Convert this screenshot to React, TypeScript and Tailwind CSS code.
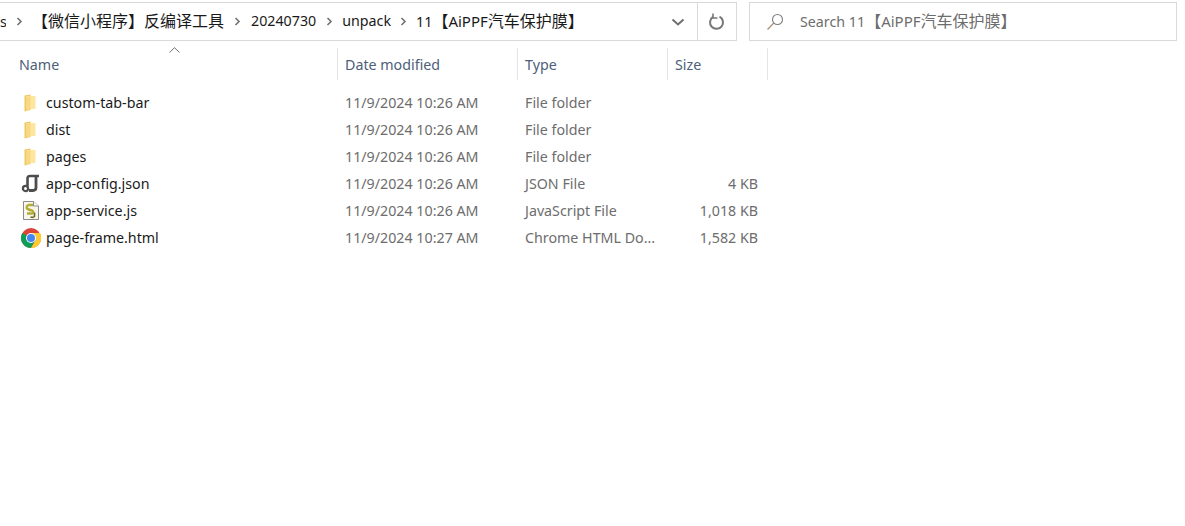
/**
 * @file File explorer folder view
 */

const FONT = "font-['Noto_Sans','Noto_Sans_CJK_SC',sans-serif]";

/**
 * Folder contents
 */
const rows = [
  {name: "custom-tab-bar", date: "11/9/2024 10:26 AM", type: "File folder", size: "", icon: "folder"},
  {name: "dist", date: "11/9/2024 10:26 AM", type: "File folder", size: "", icon: "folder"},
  {name: "pages", date: "11/9/2024 10:26 AM", type: "File folder", size: "", icon: "folder"},
  {name: "app-config.json", date: "11/9/2024 10:26 AM", type: "JSON File", size: "4 KB", icon: "json"},
  {name: "app-service.js", date: "11/9/2024 10:26 AM", type: "JavaScript File", size: "1,018 KB", icon: "js"},
  {name: "page-frame.html", date: "11/9/2024 10:27 AM", type: "Chrome HTML Do...", size: "1,582 KB", icon: "chrome"},
];

const FolderIcon = () => (
  <svg width="16" height="18" viewBox="0 0 16 18">
    <path d="M1.5 1.5 L7.5 0.5 V16 L1.5 17.5 Z" fill="#eec766" />
    <path d="M3.5 2 H12.5 V15 H3.5 Z" fill="#fde7a0" />
    <path d="M3 16.5 L7.5 15.5 V2 L3 3 Z" fill="#f8d883" />
  </svg>
);

const JsonIcon = () => (
  <svg width="20" height="20" viewBox="0 0 20 20" fill="none" stroke="#4d4d4d">
    <path d="M6.5 12 V4.5 Q6.5 2 9 2 H18" strokeWidth="2.6" />
    <path d="M15 2.5 V13.5 Q15 16.5 12 16.5 H8" strokeWidth="2.8" />
    <circle cx="4.5" cy="14.5" r="2.6" strokeWidth="2.2" />
  </svg>
);

const JsIcon = () => (
  <svg width="18" height="21" viewBox="0 0 18 21">
    <path d="M1.5 1.5 H11.5 L16.5 6 V19.5 H1.5 Z" fill="#f7f6ea" stroke="#8c8c8c" />
    <path d="M11.5 1.5 V6 H16.5" fill="#ffffff" stroke="#8c8c8c" />
    <path d="M11 5 H6.5 Q4 6 5 8.5 Q7 10 10 10.5 Q12.5 12 10 13.5 H5" fill="none" stroke="#b5ad3a" strokeWidth="2.4" />
    <path d="M12.5 12.5 V16.5 Q11 18 8.5 17" fill="none" stroke="#6e6a24" strokeWidth="1.6" />
  </svg>
);

const ChromeIcon = () => (
  <svg width="20" height="20" viewBox="0 0 20 20">
    <circle cx="10" cy="10" r="10" fill="#db4437" />
    <path d="M10 10 L1.3 5 A10 10 0 0 0 10 20 L15 11 Z" fill="#0f9d58" />
    <path d="M10 5 H19 A10 10 0 0 1 10 20 L14.3 12.5 Z" fill="#fcc934" />
    <circle cx="10" cy="10" r="5" fill="#ffffff" />
    <circle cx="10" cy="10" r="4" fill="#4285f4" />
  </svg>
);

const FileIcon = ({icon}: {icon: string}) => {
  if (icon === "folder") return <FolderIcon />;
  if (icon === "json") return <JsonIcon />;
  if (icon === "js") return <JsIcon />;
  return <ChromeIcon />;
};

// Breadcrumb separator
const Crumb = () => (
  <svg width="11" height="11" viewBox="0 0 11 11" fill="none" stroke="#707070" strokeWidth="1.6">
    <path d="M3.5 2 L7 5.5 L3.5 9" />
  </svg>
);

const Cjk = ({children}: {children: string}) => <span className="text-[16px]">{children}</span>;

const FolderName = () => (
  <>
    11<Cjk>【</Cjk><span className="text-[15px]">AiPPF</span><Cjk>汽车保护膜】</Cjk>
  </>
);

export default function App() {
  return (
    <div className={`${FONT} w-[1185px] h-[526px] bg-white overflow-hidden text-[14.25px]`}>
      {/* Address and search bars */}
      <div className="flex h-[39px] mt-[2px] pr-[8px]">
        <div className="flex items-center w-[737px] border border-l-0 border-[#d9d9d9]">
          <div className="flex flex-1 items-center text-[#1a1a1a] whitespace-nowrap overflow-hidden">
            <span className="w-[6px] overflow-hidden">s</span>
            <span className="ml-[8px]"><Crumb /></span>
            <span className="ml-[7px] mb-[2px]"><Cjk>【微信小程序】反编译工具</Cjk></span>
            <span className="ml-[8px]"><Crumb /></span>
            <span className="ml-[8px] mb-[2px]">20240730</span>
            <span className="ml-[8px]"><Crumb /></span>
            <span className="ml-[7px] mb-[2px]">unpack</span>
            <span className="ml-[7px]"><Crumb /></span>
            <span className="ml-[7px] mb-[2px]"><FolderName /></span>
          </div>
          <div className="flex justify-center w-[38px]">
            <svg width="14" height="14" viewBox="0 0 14 14" fill="none" stroke="#707070" strokeWidth="2">
              <path d="M1.5 4.5 L7 9.5 L12.5 4.5" />
            </svg>
          </div>
          <div className="flex items-center justify-center w-[39px] h-full border-l border-[#d9d9d9]">
            <svg width="18" height="18" viewBox="0 0 18 18" fill="none" stroke="#777777" strokeWidth="2">
              <path d="M11.5 3.6 A6.5 6.5 0 1 1 5 3.9" />
              <path d="M5 0.5 V5 H9.5" strokeWidth="1.6" />
            </svg>
          </div>
        </div>
        <div className="flex items-center flex-1 ml-[12px] border border-[#d9d9d9] text-[#6d6d6d] whitespace-nowrap">
          <svg className="ml-[16px]" width="18" height="18" viewBox="0 0 18 18" fill="none" stroke="#7d7d7d" strokeWidth="1.1">
            <circle cx="11.5" cy="6.5" r="5" />
            <path d="M7.8 10 L1.5 16.5" stroke="#a58f6e" />
          </svg>
          <span className="ml-[16px] mb-[2px]">Search <FolderName /></span>
        </div>
      </div>

      {/* Column headers */}
      <div className="relative flex h-[32px] mt-[7px] items-center text-[#4c607a]">
        <svg className="absolute left-[169px] -top-[1px]" width="11" height="6" viewBox="0 0 11 6" fill="none" stroke="#6f6f6f">
          <path d="M0.5 5.5 L5.5 0.7 L10.5 5.5" />
        </svg>
        <div className="w-[338px] pl-[19px] pt-[2px] h-full flex items-center border-r border-[#e5e5e5]">Name</div>
        <div className="w-[180px] pl-[7px] pt-[2px] h-full flex items-center border-r border-[#e5e5e5]">Date modified</div>
        <div className="w-[150px] pl-[7px] pt-[2px] h-full flex items-center border-r border-[#e5e5e5]">Type</div>
        <div className="w-[100px] pl-[7px] pt-[2px] h-full flex items-center border-r border-[#e5e5e5]">Size</div>
      </div>

      {/* File rows */}
      <div className="flex flex-col mt-[9px]">
        {rows.map(row => (
          <div key={row.name} className="flex items-center h-[27px] whitespace-nowrap">
            <div className="flex items-center w-[338px]">
              <div className="flex items-center justify-center w-[22px] h-[22px] ml-[20px]">
                <FileIcon icon={row.icon} />
              </div>
              <span className="ml-[4px] text-[#1a1a1a]">{row.name}</span>
            </div>
            <div className="w-[180px] pl-[7px] text-[#6d6d6d]">{row.date}</div>
            <div className="w-[150px] pl-[7px] text-[#6d6d6d]">{row.type}</div>
            <div className="w-[90px] text-right text-[#6d6d6d]">{row.size}</div>
          </div>
        ))}
      </div>
    </div>
  );
}
